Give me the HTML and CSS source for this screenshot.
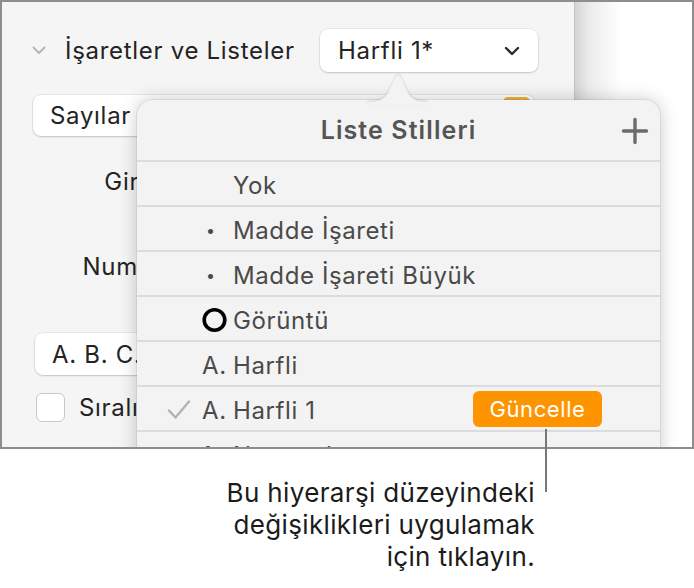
FILE: index.html
```html
<!DOCTYPE html>
<html lang="tr">
<head>
<meta charset="UTF-8">
<meta name="viewport" content="width=device-width, initial-scale=1.0">
<title>Liste Stilleri</title>
<link rel="stylesheet" href="styles.css">
</head>
<body>

<div class="page">
  <div class="window">
    <div class="sidebar">
      <div class="section-head">
        <svg class="disclosure" width="14" height="9" viewBox="0 0 14 9"><polyline points="1.5,1.5 7,7 12.5,1.5" fill="none" stroke="#b4b4b4" stroke-width="1.8" stroke-linecap="round" stroke-linejoin="round"/></svg>
        <span class="section-title">İşaretler ve Listeler</span>
        <div class="popup style-popup">
          <span>Harfli 1*</span>
          <svg class="popup-chevron" width="16" height="10" viewBox="0 0 16 10"><polyline points="2,2 8,8 14,2" fill="none" stroke="#2b2b2b" stroke-width="2.4" stroke-linecap="round" stroke-linejoin="round"/></svg>
        </div>
      </div>

      <div class="popup kind-popup">
        <span>Sayılar</span>
        <span class="swatch"></span>
      </div>

      <div class="field-row indent-row"><span class="field-label">Girinti</span></div>
      <div class="field-row number-row"><span class="field-label">Numara</span></div>

      <div class="popup format-popup"><span>A. B. C.</span></div>

      <div class="check-row">
        <span class="checkbox"></span>
        <span>Sıralı</span>
      </div>
    </div>
    <div class="canvas"></div>

    <div class="popover">
      <div class="popover-head">
        <span class="popover-title">Liste Stilleri</span>
        <svg class="add-icon" width="28" height="28" viewBox="0 0 28 28"><path d="M14 2.5v23M2.5 14h23" stroke="#6b6b6b" stroke-width="3.4" stroke-linecap="round"/></svg>
      </div>
      <ul class="style-list">
        <li class="style-row"><span class="check"></span><span class="marker"></span><span>Yok</span></li>
        <li class="style-row"><span class="check"></span><span class="marker bullet">•</span><span>Madde İşareti</span></li>
        <li class="style-row"><span class="check"></span><span class="marker bullet">•</span><span>Madde İşareti Büyük</span></li>
        <li class="style-row"><span class="check"></span><span class="marker"><svg width="26" height="26" viewBox="0 0 26 26"><circle cx="12.5" cy="13" r="10.3" fill="none" stroke="#000" stroke-width="3.6"/></svg></span><span>Görüntü</span></li>
        <li class="style-row"><span class="check"></span><span class="marker">A.</span><span>Harfli</span></li>
        <li class="style-row current">
          <span class="check"><svg width="24" height="20" viewBox="0 0 24 20"><polyline points="2,10.5 8.5,17.5 22,1.5" fill="none" stroke="#b3b3b3" stroke-width="2.4" stroke-linecap="round" stroke-linejoin="round"/></svg></span>
          <span class="marker">A.</span><span>Harfli 1</span>
          <button class="update-btn">Güncelle</button>
        </li>
        <li class="style-row"><span class="check"></span><span class="marker">1.</span><span>Numaralı</span></li>
      </ul>
    </div>
    <svg class="popover-arrow" width="60" height="32" viewBox="0 0 60 32"><path d="M0 30C11 30 16 27 20 21L27.5 5Q30 1 32.5 5L40 21C44 27 49 30 60 30V32H0Z" fill="#f3f3f3"/></svg>
  </div>

  <span class="leader"></span>
  <p class="callout">Bu hiyerarşi düzeyindeki<br>değişiklikleri uygulamak<br>için tıklayın.</p>
</div>

</body>
</html>
```

FILE: styles.css
```css
body {
  margin: 0;
  background: #fff;
  font-family: Inter, "Liberation Sans", sans-serif;
  color: #232323;
}

.page {
  position: relative;
  width: 694px;
  height: 588px;
}

.window {
  position: relative;
  display: flex;
  box-sizing: border-box;
  width: 694px;
  height: 449px;
  border: 2px solid #8d8d8d;
  overflow: hidden;
}

.sidebar {
  box-sizing: border-box;
  width: 573px;
  padding: 27px 36px 0 31px;
  background: #f5f5f5;
  border-right: 1px solid #c4c4c4;
  font-size: 24px;
  letter-spacing: 0.7px;
}

.canvas {
  flex: 1;
  background: linear-gradient(90deg, #d4d4d4 0, #ebebeb 14px, #fff 46px);
}

.section-head {
  display: flex;
  align-items: center;
  height: 43px;
}

.disclosure {
  margin-left: -1px;
  margin-right: 19px;
}

.popup {
  display: flex;
  align-items: center;
  box-sizing: border-box;
  background: #fff;
  border-radius: 8px;
  box-shadow: 0 0 0 0.5px rgba(0, 0, 0, 0.1), 0 1px 2px rgba(0, 0, 0, 0.16);
}

.style-popup {
  width: 218px;
  height: 43px;
  margin-left: auto;
  padding: 0 18px;
  justify-content: space-between;
}

.kind-popup {
  width: 502px;
  height: 41px;
  margin-top: 23px;
  padding: 0 5px 0 17px;
  justify-content: space-between;
}

.swatch {
  align-self: flex-start;
  width: 27px;
  height: 22px;
  margin-top: 2px;
  border-radius: 5px;
  background: #f2b440;
}

.field-row {
  display: flex;
  height: 28px;
  align-items: center;
}

.field-label {
  width: 143px;
  text-align: right;
}

.indent-row {
  margin-top: 31px;
}

.number-row {
  margin-top: 57px;
}

.format-popup {
  width: 500px;
  height: 42px;
  margin: 53px 0 0 2px;
  padding-left: 17px;
}

.check-row {
  display: flex;
  align-items: center;
  gap: 14px;
  margin: 18px 0 0 3px;
}

.checkbox {
  box-sizing: border-box;
  width: 29px;
  height: 29px;
  background: #fff;
  border: 1px solid #c9c9c9;
  border-radius: 6px;
}

.popover {
  position: absolute;
  left: 135px;
  top: 98px;
  width: 523px;
  height: 380px;
  background: #f3f3f3;
  border-radius: 15px 15px 0 0;
  box-shadow: 0 0 18px rgba(0, 0, 0, 0.22), 0 0 0 0.5px rgba(0, 0, 0, 0.12);
}

.popover-head {
  position: relative;
  display: flex;
  align-items: center;
  justify-content: center;
  height: 60px;
  border-bottom: 2px solid #dcdcdc;
}

.popover-title {
  font-size: 25px;
  font-weight: 600;
  letter-spacing: 1.1px;
  color: #555;
}

.add-icon {
  position: absolute;
  right: 11px;
  top: 17px;
}

.style-list {
  margin: 0;
  padding: 0;
  list-style: none;
}

.style-row {
  display: flex;
  align-items: center;
  box-sizing: border-box;
  height: 45px;
  padding-top: 3px;
  border-bottom: 2px solid #dcdcdc;
  font-size: 24px;
  letter-spacing: 0.6px;
  color: #4a4a4a;
}

.check {
  display: flex;
  justify-content: center;
  width: 65px;
  padding-left: 18px;
  box-sizing: border-box;
}

.marker {
  display: flex;
  align-items: center;
  width: 31px;
  color: #4a4a4a;
}

.marker.bullet {
  padding-left: 4px;
  font-size: 16px;
  width: 27px;
}

.update-btn {
  margin: -3px 58px 0 auto;
  width: 129px;
  height: 36px;
  border: 0;
  border-radius: 6px;
  background: #fe9500;
  color: #fff;
  font-family: inherit;
  font-size: 22px;
  letter-spacing: 0.6px;
}

.popover-arrow {
  position: absolute;
  left: 366px;
  top: 70px;
  filter: drop-shadow(0 -1px 1px rgba(0, 0, 0, 0.14));
}

.leader {
  position: absolute;
  left: 545px;
  top: 429px;
  width: 2px;
  height: 63px;
  background: #777;
}

.callout {
  margin: 28px 0 0;
  padding-right: 159px;
  text-align: right;
  font-size: 26px;
  letter-spacing: 0.35px;
  line-height: 32px;
  color: #1b1b1b;
}
```
